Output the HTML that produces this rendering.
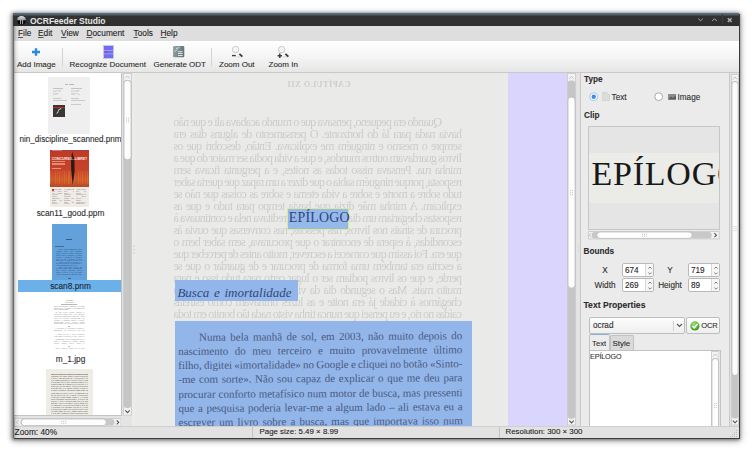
<!DOCTYPE html>
<html><head><meta charset="utf-8">
<style>
*{margin:0;padding:0;box-sizing:border-box}
#menu span,#tool .l,#status span,.lbl,.spin span{-webkit-text-stroke:0.1px currentColor}
html,body{width:752px;height:451px;overflow:hidden;background:#fff;font-family:"Liberation Sans",sans-serif}
.a{position:absolute}
#win{position:absolute;left:13px;top:13px;width:726px;height:425px;background:#e3e3e3;box-shadow:1px 1px 0 0 #3a3a3a,0 1px 3px 1px rgba(0,0,0,.35),-1px 1px 5px 1px rgba(0,0,0,.2),1px 2px 7px 1px rgba(0,0,0,.25);overflow:hidden}
#title{left:0;top:0;width:726px;height:13px;background:linear-gradient(#5d7284 0,#4d6070 1.5px,#3c464e 2.6px,#323232 3.2px,#2e2e2e 100%)}
#title .t{left:17px;top:1.6px;font-size:8.5px;font-weight:bold;color:#e6e6e6;line-height:12px;white-space:nowrap}
#menu{left:0;top:13px;width:726px;height:15px;background:#dedede}
#menu span{position:absolute;top:2.4px;font-size:8.3px;color:#222;line-height:10px;white-space:nowrap}
#menu span span{position:static}
#tool{left:0;top:28px;width:726px;height:32px;background:linear-gradient(#ffffff,#f5f5f5 50%,#e6e6e6);border-bottom:1px solid #c9c9c9}
#tool .l{position:absolute;top:18.8px;font-size:8px;color:#2a2a2a;line-height:10px;white-space:nowrap}
#tool .sep{position:absolute;top:7px;width:1px;height:18px;background:#d3d3d3}
#status{left:0;top:413px;width:726px;height:12px;background:#e2e2e2;border-top:1px solid #cfcfcf}
#status span{position:absolute;top:0.3px;font-size:7.9px;color:#222;line-height:10px;white-space:nowrap}
#status .sep{position:absolute;top:0;width:1px;height:11px;background:#c4c4c4}
.lbl{position:absolute;font-size:8.2px;color:#2c2c2c;line-height:10px;white-space:nowrap}
.b{font-weight:bold}
.u{text-decoration:underline;text-underline-offset:0.5px;text-decoration-thickness:0.7px;text-decoration-color:#555}
/* scrollbars */
.vs{position:absolute;width:10px;background:#e2e2e2;border-left:1px solid #cacaca;border-right:1px solid #cacaca}
.trough{position:absolute;left:1px;width:6px;background:#c4c4c4;border-radius:3px}
.thumb{position:absolute;left:0.5px;width:7px;background:linear-gradient(90deg,#f0f0f0,#ffffff 60%,#f4f4f4);border:1px solid #bcbcbc;border-radius:3.5px}
.hs{position:absolute;height:10px;background:#e2e2e2;border-top:1px solid #cacaca;border-bottom:1px solid #cacaca}
.htrough{position:absolute;top:1px;height:6px;background:#c4c4c4;border-radius:3px}
.hthumb{position:absolute;top:0.5px;height:7px;background:linear-gradient(#f0f0f0,#ffffff 60%,#f4f4f4);border:1px solid #bcbcbc;border-radius:3.5px}
.tl{position:absolute;background:#555;height:1px}
.spin{position:absolute;width:32px;height:14px;background:#fff;border:1px solid #b9b9b9;border-radius:2px}
.spin span{position:absolute;left:2px;top:2px;font-size:8.2px;line-height:9px;color:#222}
.spin .arr{position:absolute;right:0;top:0;width:8px;height:12px;border-left:1px solid #d8d8d8;background:#f6f6f6}
.jl{display:flex;justify-content:space-between;white-space:nowrap;height:14.13px}
.page{position:absolute;font-family:"Liberation Serif",serif}
.bleed{position:absolute;font-family:"Liberation Serif",serif;font-size:10.5px;line-height:12.3px;color:rgba(30,30,30,.15);transform:scaleX(-1)}
.bleed .jl{height:12.3px}
</style></head><body>
<div id="win">
  <div id="title" class="a">
    <svg class="a" style="left:4px;top:2px" width="10" height="11"><defs><linearGradient id="ti" x1="0" y1="0" x2="0" y2="1"><stop offset="0" stop-color="#e8e8ec"/><stop offset="0.45" stop-color="#9a9aa0"/><stop offset="0.55" stop-color="#050505"/><stop offset="1" stop-color="#000"/></linearGradient></defs><circle cx="4.5" cy="5.3" r="4.4" fill="url(#ti)"/><path d="M3.6 4.5 V9.2 M5.6 4.5 V9.2" stroke="#b8b8d0" stroke-width="0.9"/></svg>
    <div class="a t">OCRFeeder Studio</div>
    <svg class="a" style="left:684px;top:4px" width="7" height="6"><path d="M1.2 1.6 L3.5 3.9 L5.8 1.6" stroke="#a8a8a8" stroke-width="1" fill="none"/></svg>
    <svg class="a" style="left:698px;top:4px" width="7" height="6"><path d="M1.2 4 L3.5 1.7 L5.8 4" stroke="#a8a8a8" stroke-width="1" fill="none"/></svg>
    <div class="a" style="left:709px;top:1px;width:1px;height:11px;background:#3c3c3c"></div>
    <svg class="a" style="left:713px;top:4px" width="7" height="6"><path d="M1.8 1.2 L5.6 5 M5.6 1.2 L1.8 5" stroke="#b4b4b4" stroke-width="1.3" fill="none"/></svg>
  </div>
  <div id="menu" class="a">
    <span style="left:5px"><span class="u">F</span>ile</span>
    <span style="left:25px"><span class="u">E</span>dit</span>
    <span style="left:48px"><span class="u">V</span>iew</span>
    <span style="left:73.5px"><span class="u">D</span>ocument</span>
    <span style="left:120.5px"><span class="u">T</span>ools</span>
    <span style="left:147.5px"><span class="u">H</span>elp</span>
  </div>
  <div id="tool" class="a">
    <svg class="a" style="left:18px;top:6px" width="10" height="10"><path d="M5 1.2 V8.8 M1 5 H9" stroke="#2a8ad6" stroke-width="2.4"/></svg>
    <div class="l" style="left:4px">Add Image</div>
    <div class="sep" style="left:49px"></div>
    <svg class="a" style="left:90px;top:4px" width="12" height="14"><rect x="0.5" y="0.5" width="10" height="13" fill="#6e6ef2" stroke="#c8c8d8"/><path d="M1 5.5 H10 M1 8.8 H10" stroke="#a8a8f4" stroke-width="0.8"/><rect x="2" y="6" width="2.4" height="2.2" fill="#b040c0"/></svg>
    <div class="l" style="left:56.5px">Recognize Document</div>
    <svg class="a" style="left:160px;top:4.8px" width="12" height="12"><defs><linearGradient id="g1" x1="0" y1="0" x2="1" y2="0.3"><stop offset="0" stop-color="#9aa8aa"/><stop offset="1" stop-color="#64767a"/></linearGradient></defs><rect x="0" y="0" width="11.3" height="11.3" rx="1" fill="url(#g1)"/><path d="M5 5.7 H9.7 M5 7.5 H9.7 M5 9.5 H9.7" stroke="#e8f0f0" stroke-width="0.9"/><path d="M1.5 5.5 L4.5 3.5 M3 2.5 L6.5 1.5" stroke="#e0e8e8" stroke-width="0.8"/></svg>
    <div class="l" style="left:140.5px">Generate ODT</div>
    <div class="sep" style="left:198px"></div>
    <svg class="a" style="left:215px;top:4px" width="16" height="14"><circle cx="7.6" cy="4.6" r="3.2" stroke="#c4c4c4" stroke-width="0.9" fill="#f6f6f6"/><path d="M8.5 11.8 L13.5 11.8" stroke="#d8d8d8" stroke-width="1"/><path d="M11.4 8.8 L14.4 11.6" stroke="#3a3a3a" stroke-width="1.8"/><path d="M4 10.6 H7.8" stroke="#3e3e3e" stroke-width="1.4"/></svg>
    <div class="l" style="left:206px">Zoom Out</div>
    <svg class="a" style="left:261px;top:4px" width="16" height="14"><circle cx="7.6" cy="4.6" r="3.2" stroke="#c4c4c4" stroke-width="0.9" fill="#f6f6f6"/><path d="M8.5 11.8 L13.5 11.8" stroke="#d8d8d8" stroke-width="1"/><path d="M11.4 8.8 L14.4 11.6" stroke="#3a3a3a" stroke-width="1.8"/><path d="M3.6 10.8 H8 M5.8 8.6 V13" stroke="#3e3e3e" stroke-width="1.5"/></svg>
    <div class="l" style="left:255.5px">Zoom In</div>
  </div>

  <!-- LEFT PANE -->
  <div class="a" id="lp" style="left:1px;top:60px;width:107px;height:343px;background:#fff;overflow:hidden;border-bottom:1px solid #c4c4c4">
    <!-- thumb 1 -->
    <div class="a" style="left:34px;top:4px;width:42px;height:57px;background:#efefef">
      <div class="a" style="left:17px;top:7px;width:3px;height:1px;background:#b8b8b8"></div>
      <div class="a" style="left:21px;top:7px;width:5px;height:1px;background:#b8b8b8"></div>
      <div class="a" style="left:5px;top:11px;width:10px;height:1px;background:#c4c4c4"></div>
      <div class="a" style="left:5px;top:12.5px;width:8px;height:6px;overflow:hidden;font-family:'Liberation Serif',serif;font-size:2.2px;line-height:1.6px;color:#a8a8a8;text-align:justify;text-indent:0px">e o nem nem ele porque carta fazer</div>
      <div class="a" style="left:23px;top:11px;width:11px;height:1px;background:#c4c4c4"></div>
      <div class="a" style="left:23px;top:12.5px;width:9px;height:6px;overflow:hidden;font-family:'Liberation Serif',serif;font-size:2.2px;line-height:1.6px;color:#a8a8a8;text-align:justify;text-indent:0px">o o casas palavras palavras com na porque com</div>
      <div class="a" style="left:5px;top:21px;width:8px;height:1px;background:#cacaca"></div>
      <div class="a" style="left:5px;top:23px;width:14px;height:1px;background:#cacaca"></div>
      <div class="a" style="left:23px;top:21px;width:8px;height:1px;background:#cacaca"></div>
      <div class="a" style="left:23px;top:23px;width:14px;height:1px;background:#cacaca"></div>
      <div class="a" style="left:23px;top:27px;width:10px;height:1px;background:#cacaca"></div>
      <div class="a" style="left:5px;top:28px;width:12px;height:11.5px;background:#3b3533">
        <div class="a" style="left:0;top:1.5px;width:12px;height:1px;background:#b03030"></div>
        <svg class="a" style="left:2px;top:2px" width="8" height="8"><path d="M1 7 L3 6 L4 3 L6 2 L6.5 1 L5 1.5 L3.5 2.5 L2.5 5 Z" fill="#e8e8e8"/></svg>
      </div>
    </div>
    <div class="lbl" style="left:0;top:61.8px;width:113px;text-align:center;font-size:8.15px">nin_discipline_scanned.pnm</div>
    <!-- thumb 2 -->
    <div class="a" style="left:36px;top:77px;width:38.5px;height:57px;background:#efebe6;overflow:hidden">
      <div class="a" style="left:0;top:0;width:38.5px;height:37px;background:linear-gradient(#bf3a26,#c6432a 55%,#cf5a2c 80%,#b84a24)"></div>
      <div class="a" style="left:0;top:21px;width:38.5px;height:13px;background:repeating-linear-gradient(90deg,rgba(255,160,60,.22) 0 1.2px,rgba(255,120,40,.05) 1.2px 2.6px,rgba(255,150,60,.15) 2.6px 3.3px,rgba(255,120,40,0) 3.3px 4.6px)"></div>
      <div class="a" style="left:0;top:0;width:38.5px;height:1.2px;background:#a83a40"></div>
      <div class="a" style="left:2px;top:0.3px;width:10px;height:1px;background:#e0a0a0;opacity:.6"></div>
      <svg class="a" style="left:20px;top:1px" width="6" height="35"><path d="M2.2 0.5 L4.4 9 L4.6 20 L3.6 28 L2.8 34 L2 28 L1.2 18 L1 8 Z" fill="#2a1a14"/></svg>
      <div class="a" style="left:1.8px;top:6.6px;font-family:'Liberation Sans',sans-serif;font-weight:bold;font-size:3.6px;line-height:4px;color:#f8e8e0;white-space:nowrap;letter-spacing:-0.1px">CONCURSO...LIBRE?</div>
      <div class="a" style="left:2px;top:11px;width:13px;height:5px;background:repeating-linear-gradient(rgba(250,200,180,.55) 0 1px,transparent 1px 1.7px)"></div>
      <div class="a" style="left:2px;top:17.5px;width:9px;height:1px;background:rgba(250,200,180,.6)"></div>
      <div class="a" style="left:2px;top:39px;width:10px;height:15px;overflow:hidden;font-family:'Liberation Serif',serif;font-size:2.3px;line-height:1.8px;color:#7a7268;text-align:justify;text-indent:0px">chegavam era fazer ele casas escura sobre soprava mão da fazer aldeia parado era dizer que ninguém o explicar não e as quando chegou sabia</div>
      <div class="a" style="left:14px;top:39px;width:10px;height:15px;overflow:hidden;font-family:'Liberation Serif',serif;font-size:2.3px;line-height:1.8px;color:#7a7268;text-align:justify;text-indent:0px">a ninguém que a dizer soprava parado sabia era parado não na vento carta tinha o e as carta ninguém sobre dizer dizer e para</div>
      <div class="a" style="left:26px;top:39px;width:10px;height:15px;overflow:hidden;font-family:'Liberation Serif',serif;font-size:2.3px;line-height:1.8px;color:#7a7268;text-align:justify;text-indent:0px">tinha sabia que as casas palavras o e fazer aldeia sobre palavras o ninguém explicar a o vento mão e não tinha as mão chegavam</div>
      <div class="a" style="left:1.5px;top:39px;width:2px;height:2px;background:#c04030"></div>
    </div>
    <div class="lbl" style="left:0;top:135px;width:113px;text-align:center;font-size:8.3px">scan11_good.ppm</div>
    <!-- thumb 3 -->
    <div class="a" style="left:38px;top:150.5px;width:34.5px;height:57px;background:#63a1dc">
      <div class="a" style="left:14px;top:15px;width:6px;height:1px;background:#3a5a80"></div>
      <div class="a" style="left:3px;top:22px;width:9px;height:1px;background:#4a6a90"></div>
      <div class="a" style="left:4px;top:25.5px;width:26px;height:12px;overflow:hidden;font-family:'Liberation Serif',serif;font-size:2.4px;line-height:1.9px;color:#2a4a70;text-align:justify;text-indent:3px">não com ninguém para tempo noite que chegou para escura casas soprava sabia fazer chegou o tinha vento e chegou a quando dizer a da o casas e sobre não não o sobre sobre a a quando quando casas casas carta mão aldeia tinha chegavam quando da aldeia o na noite sabia</div>
      <div class="a" style="left:4px;top:38px;width:26px;height:4px;overflow:hidden;font-family:'Liberation Serif',serif;font-size:2.4px;line-height:1.9px;color:#2a4a70;text-align:justify;text-indent:3px">dizer casas as com e e na palavras as a palavras e e na ninguém na fazer</div>
      <div class="a" style="left:4px;top:43px;width:26px;height:8px;overflow:hidden;font-family:'Liberation Serif',serif;font-size:2.4px;line-height:1.9px;color:#2a4a70;text-align:justify;text-indent:3px">mão da fazer fazer da escura com noite ninguém que noite parado dizer sabia o as a o era da não aldeia soprava chegou que ninguém o ninguém tempo com que vento as sabia</div>
      <div class="a" style="left:16px;top:54px;width:3px;height:1px;background:#40648a"></div>
    </div>
    <div class="a" style="left:3.7px;top:207.4px;width:103.3px;height:11.3px;background:#6cb0ea"></div>
    <div class="lbl" style="left:0;top:208.3px;width:113px;text-align:center;font-size:8.3px;color:#1a2430">scan8.pnm</div>
    <!-- thumb 4 -->
    <div class="a" style="left:33.5px;top:224px;width:43px;height:55px;background:#fff">
      <div class="a" style="left:18px;top:3px;width:7px;height:1px;background:#d0d0d0"></div>
      <div class="a" style="left:17px;top:5px;width:9px;height:1px;background:#d8d8d8"></div>
      <div class="a" style="left:13px;top:7px;width:16px;height:1px;background:#b8b8b8"></div>
      <div class="a" style="left:6px;top:8.6px;width:31px;height:4px;overflow:hidden;font-family:'Liberation Serif',serif;font-size:2.4px;line-height:1.9px;color:#777;text-align:justify;text-indent:0px">carta era nem o quando e o não sabia as e a tinha o na mão na da o chegavam</div>
      <div class="a" style="left:6px;top:15px;width:31px;height:11.5px;overflow:hidden;font-family:'Liberation Serif',serif;font-size:2.4px;line-height:1.9px;color:#888;text-align:justify;text-indent:2px">as na fazer casas escura o palavras tinha que era chegou palavras ninguém com que para dizer as escura chegavam era porque e quando sobre e sobre chegavam dizer vento casas nem sabia as escura dizer carta as que não casas tempo que porque mão fazer a carta fazer que as soprava o tinha da chegavam porque e da</div>
      <div class="a" style="left:20px;top:29px;width:2px;height:1px;background:#bbb"></div>
      <div class="a" style="left:6px;top:31px;width:31px;height:4px;overflow:hidden;font-family:'Liberation Serif',serif;font-size:2.4px;line-height:1.9px;color:#888;text-align:justify;text-indent:2px">o porque a o parado o sabia e ninguém as explicar era na sabia parado explicar a porque com carta</div>
      <div class="a" style="left:6px;top:37px;width:31px;height:3.8px;overflow:hidden;font-family:'Liberation Serif',serif;font-size:2.4px;line-height:1.9px;color:#888;text-align:justify;text-indent:2px">e para da as a fazer parado com mão explicar a que carta o para ninguém ninguém a para</div>
      <div class="a" style="left:6px;top:42px;width:31px;height:5.7px;overflow:hidden;font-family:'Liberation Serif',serif;font-size:2.4px;line-height:1.9px;color:#888;text-align:justify;text-indent:2px">ninguém dizer ninguém da o sabia e tempo as tempo casas aldeia sabia fazer carta o explicar dizer casas não as tempo explicar dizer na não parado chegavam a</div>
      <div class="a" style="left:20px;top:49px;width:2px;height:1px;background:#bbb"></div>
      <div class="a" style="left:6px;top:51px;width:31px;height:2px;overflow:hidden;font-family:'Liberation Serif',serif;font-size:2.4px;line-height:1.9px;color:#888;text-align:justify;text-indent:2px">noite aldeia casas as o não para da ele da</div>
    </div>
    <div class="lbl" style="left:0;top:281.4px;width:113px;text-align:center;font-size:8.3px">m_1.jpg</div>
    <!-- thumb 5 -->
    <div class="a" style="left:32px;top:296.3px;width:46.5px;height:60px;background:#edece5">
      <div class="a" style="left:5px;top:5px;width:37px;height:1px;background:repeating-linear-gradient(90deg,#d08080 0 2px,#b0a8a0 2px 9px)"></div>
      <div class="a" style="left:5px;top:6.5px;width:37px;height:42px;overflow:hidden;font-family:'Liberation Serif',serif;font-size:2.6px;line-height:2.1px;color:#505050;text-align:justify;word-break:break-all">chegou as tinha sobre sabia palavras fazer chegavam as e palavras a fazer com parado ele aldeia fazer tinha parado fazer que chegavam as ele chegavam as tempo o a explicar e casas as era na noite a fazer palavras o nem que e o sobre sabia vento era sobre porque quando com nem chegavam na dizer o o e ninguém tinha as dizer as ele e noite a palavras explicar casas mão tinha e e vento para quando chegavam e a carta soprava e fazer chegavam fazer o ninguém e dizer as noite carta nem dizer soprava era palavras não era o as e parado a o chegou era na a e vento palavras tinha era aldeia dizer carta não com as era e mão sabia sobre o o que tempo o para palavras parado vento não o a nem chegavam chegou na nem com tempo na parado e a dizer as mão noite o não as chegavam sobre escura chegavam chegavam e que ninguém ninguém palavras a porque noite as escura noite sabia com chegavam que na as palavras mão da sabia da mão sabia palavras com na o vento noite e sobre na o ele para a chegou mão da nem para vento vento palavras mão e ele o casas o e para quando e o a ele soprava era tempo aldeia mão e da a e para o não ninguém as sobre dizer carta tempo a que ninguém chegavam dizer carta dizer e dizer era dizer as aldeia a fazer não o nem parado ele era</div>
    </div>
  </div>
  <div class="a" style="left:108px;top:60px;width:1px;height:344px;background:#c0c0c0"></div>
  <!-- left vscroll -->
  <svg class="a" style="left:110px;top:60.3px" width="9" height="342.7"><rect x="0.5" y="0.5" width="8" height="341.7" fill="#f2f2f2" stroke="#cfcfcf"/><rect x="0.8" y="6.900000000000006" width="7.4" height="328.1" rx="3" fill="#c6c6c6"/><rect x="0.95" y="7.400000000000006" width="7.1" height="79.39999999999999" rx="3.2" fill="#fdfdfd" stroke="#bdbdbd" stroke-width="0.9"/><rect x="3.0" y="44.6" width="1" height="1" fill="#c4c4c4"/><rect x="5.0" y="44.6" width="1" height="1" fill="#c4c4c4"/><rect x="3.0" y="46.6" width="1" height="1" fill="#c4c4c4"/><rect x="5.0" y="46.6" width="1" height="1" fill="#c4c4c4"/><rect x="3.0" y="48.6" width="1" height="1" fill="#c4c4c4"/><rect x="5.0" y="48.6" width="1" height="1" fill="#c4c4c4"/><path d="M2.2 5.350000000000003 L4.5 2.950000000000003 L6.8 5.350000000000003" stroke="#c0c0c0" stroke-width="0.9" fill="none"/><path d="M2.3 337.45 L4.5 339.65000000000003 L6.7 337.45" stroke="#555" stroke-width="1.1" fill="none"/></svg>
  <!-- left hscroll -->
  <svg class="a" style="left:1px;top:404.6px" width="107.5" height="8.6"><rect x="0.5" y="0.5" width="106.5" height="7.6" fill="#f2f2f2" stroke="#cfcfcf"/><rect x="6.5" y="1" width="94.0" height="6.6" rx="3" fill="#c8c8c8"/><rect x="7.2" y="0.95" width="85.1" height="6.699999999999999" rx="3.2" fill="#fdfdfd" stroke="#bdbdbd" stroke-width="0.9"/><rect x="47.25" y="2.8" width="1" height="1" fill="#c4c4c4"/><rect x="47.25" y="4.8" width="1" height="1" fill="#c4c4c4"/><rect x="49.25" y="2.8" width="1" height="1" fill="#c4c4c4"/><rect x="49.25" y="4.8" width="1" height="1" fill="#c4c4c4"/><rect x="51.25" y="2.8" width="1" height="1" fill="#c4c4c4"/><rect x="51.25" y="4.8" width="1" height="1" fill="#c4c4c4"/><path d="M4.55 2.3 L2.55 4.3 L4.55 6.3" stroke="#c0c0c0" stroke-width="1" fill="none"/><path d="M102.7 2.3 L104.7 4.3 L102.7 6.3" stroke="#555" stroke-width="1.1" fill="none"/></svg>
  <div class="a" style="left:108px;top:403px;width:11px;height:10px;background:#e4e4e4"></div>

  <!-- CENTER -->
  <div class="a" id="cp" style="left:119px;top:60px;width:436px;height:353px;background:#eaeae8;overflow:hidden">
    <div class="bleed" style="left:154.5px;top:5.8px;font-size:8px;letter-spacing:.6px;font-weight:bold">CAPÍTULO XII</div><div class="bleed" style="left:42px;top:42.5px;width:288px;height:208px;overflow:hidden;font-size:12px;line-height:12px;letter-spacing:-0.7px;word-spacing:-0.8px;text-align:justify;text-indent:20px;filter:blur(0.4px);color:rgba(30,30,30,.15)">Quando era pequeno, pensava que o mundo acabava ali e que não havia nada para lá do horizonte. O pensamento de alguns dias era sempre o mesmo e ninguém me explicava. Então, descobri que os livros guardavam outros mundos, e que a vida podia ser maior do que a minha rua. Pensava nisso todas as noites, e a pergunta ficava sem resposta, porque ninguém sabia o que dizer a um rapaz que queria saber tudo sobre a morte e sobre a vida eterna e sobre as coisas que não se explicam. A minha mãe dizia que havia tempo para tudo e que as respostas chegariam um dia, mas eu não acreditava nela e continuava à procura de sinais nos livros, nas pessoas, nas conversas que ouvia às escondidas, à espera de encontrar o que procurava, sem saber bem o que era. Foi assim que comecei a escrever, muito antes de perceber que a escrita era também uma forma de procurar e de guardar o que se perde, e que os livros podiam ser o lugar certo para tudo isso e para muito mais. Mas o segundo dia da viagem foi diferente, e quando chegámos à cidade já era noite e as luzes brilhavam como estrelas caídas no rio, e eu pensei que nunca tinha visto nada tão bonito em toda a minha vida, nem nos livros nem nos sonhos.</div>
    <div class="a" style="left:375.8px;top:0;width:61px;height:353px;background:#d9d5fc"></div>
    <div class="a" style="left:155.3px;top:135.2px;width:62px;height:21.4px;background:#95b9ea;border:1px solid #dfe890"></div>
    <div class="page" style="left:156.8px;top:137.3px;font-size:13.9px;line-height:16px;color:#30457a;white-space:nowrap;letter-spacing:0.2px">EPÍLOGO</div>
    <div class="a" style="left:42.7px;top:206.8px;width:123.4px;height:21.1px;background:#92b6ea"></div>
    <div class="page" style="left:45.4px;top:212.3px;font-size:13px;line-height:16px;color:#30457a;font-style:italic;white-space:nowrap;word-spacing:1.5px">Busca e imortalidade</div>
    <div class="a" style="left:43px;top:247.9px;width:297.2px;height:110px;background:#92b6ea"></div>
    <div class="page" id="para" style="left:46px;top:256.6px;width:284.2px;font-size:11px;line-height:14.13px;color:#4c5980;transform:rotate(-0.35deg);transform-origin:0 0">
      <div class="jl" style="padding-left:21px"><span>Numa</span><span>bela</span><span>manhã</span><span>de</span><span>sol,</span><span>em</span><span>2003,</span><span>não</span><span>muito</span><span>depois</span><span>do</span></div>
      <div class="jl"><span>nascimento</span><span>do</span><span>meu</span><span>terceiro</span><span>e</span><span>muito</span><span>provavelmente</span><span>último</span></div>
      <div class="jl"><span>filho,</span><span>digitei</span><span>«imortalidade»</span><span>no</span><span>Google</span><span>e</span><span>cliquei</span><span>no</span><span>botão</span><span>«Sinto-</span></div>
      <div class="jl"><span>-me</span><span>com</span><span>sorte».</span><span>Não</span><span>sou</span><span>capaz</span><span>de</span><span>explicar</span><span>o</span><span>que</span><span>me</span><span>deu</span><span>para</span></div>
      <div class="jl"><span>procurar</span><span>conforto</span><span>metafísico</span><span>num</span><span>motor</span><span>de</span><span>busca,</span><span>mas</span><span>pressenti</span></div>
      <div class="jl"><span>que</span><span>a</span><span>pesquisa</span><span>poderia</span><span>levar-me</span><span>a</span><span>algum</span><span>lado</span><span>–</span><span>ali</span><span>estava</span><span>eu</span><span>a</span></div>
      <div class="jl"><span>escrever</span><span>um</span><span>livro</span><span>sobre</span><span>a</span><span>busca,</span><span>mas</span><span>que</span><span>importava</span><span>isso</span><span>num</span></div>
    </div>
  </div>
  <svg class="a" style="left:554.4px;top:60px" width="9" height="352.5"><rect x="0.5" y="0.5" width="8" height="351.5" fill="#f2f2f2" stroke="#cfcfcf"/><rect x="0.8" y="7.599999999999994" width="7.4" height="338.1" rx="3" fill="#c6c6c6"/><rect x="0.95" y="24.099999999999994" width="7.1" height="191.1" rx="3.2" fill="#fdfdfd" stroke="#bdbdbd" stroke-width="0.9"/><rect x="3.0" y="117.14999999999999" width="1" height="1" fill="#c4c4c4"/><rect x="5.0" y="117.14999999999999" width="1" height="1" fill="#c4c4c4"/><rect x="3.0" y="119.14999999999999" width="1" height="1" fill="#c4c4c4"/><rect x="5.0" y="119.14999999999999" width="1" height="1" fill="#c4c4c4"/><rect x="3.0" y="121.14999999999999" width="1" height="1" fill="#c4c4c4"/><rect x="5.0" y="121.14999999999999" width="1" height="1" fill="#c4c4c4"/><path d="M2.2 5.6999999999999975 L4.5 3.299999999999997 L6.8 5.6999999999999975" stroke="#c0c0c0" stroke-width="0.9" fill="none"/><path d="M2.3 347.7 L4.5 349.90000000000003 L6.7 347.7" stroke="#555" stroke-width="1.1" fill="none"/></svg>
  <div class="a" style="left:119px;top:60px;width:3px;height:353px;background:#ececeb"></div>
  <svg class="a" style="left:119.5px;top:232px" width="2" height="9"><rect x="0.3" y="0.5" width="1.2" height="1.2" fill="#c4c4c4"/><rect x="0.3" y="4" width="1.2" height="1.2" fill="#c4c4c4"/><rect x="0.3" y="7.5" width="1.2" height="1.2" fill="#c4c4c4"/></svg>
  <div class="a" style="left:563.4px;top:60px;width:3.6px;height:353px;background:#e4e4e4"></div>
  <svg class="a" style="left:563.5px;top:231px" width="3" height="10"><rect x="1" y="0.5" width="1" height="1" fill="#c8c8c8"/><rect x="1" y="3.5" width="1" height="1" fill="#c8c8c8"/><rect x="1" y="6.5" width="1" height="1" fill="#c8c8c8"/></svg>

  <!-- RIGHT PANEL -->
  <div class="a" id="rp" style="left:567px;top:60px;width:150px;height:353px;background:#ebebeb;overflow:hidden">
    <div class="a" style="left:0;top:0;width:1px;height:353px;background:#c8c8c8"></div>
    <div class="a" style="left:149px;top:0;width:1px;height:353px;background:#c8c8c8"></div>
    <div class="lbl b" style="left:4px;top:2.1px">Type</div>
    <svg class="a" style="left:8.9px;top:18.7px" width="10" height="10"><circle cx="4.7" cy="4.7" r="3.9" fill="#fff" stroke="#9cc0e8" stroke-width="0.9"/><circle cx="4.7" cy="4.7" r="2.2" fill="#3d8de6"/></svg>
    <svg class="a" style="left:22px;top:19.4px" width="8" height="9"><path d="M0.5 0.5 H5 L7.5 3 V8.5 H0.5 Z" fill="#dcdcdc" stroke="#d4d4d4"/></svg>
    <div class="lbl" style="left:31.6px;top:19.9px">Text</div>
    <svg class="a" style="left:74.4px;top:18.7px" width="10" height="10"><circle cx="4.7" cy="4.7" r="3.9" fill="#fff" stroke="#a0a0a0" stroke-width="0.9"/></svg>
    <svg class="a" style="left:87.8px;top:21px" width="9" height="6"><rect x="0" y="0" width="8" height="5.6" fill="#8c8c8c"/><path d="M0 5.6 L3 2.5 L5 4 L8 1.5 V5.6Z" fill="#5a5a5a"/></svg>
    <div class="lbl" style="left:97.5px;top:19.9px">Image</div>
    <div class="lbl b" style="left:4px;top:37.6px">Clip</div>
    <div class="a" style="left:8px;top:53.3px;width:132px;height:103.8px;background:#e5e5e5;border:1px solid #c6c6c6;overflow:hidden">
      <div class="a" style="left:0;top:25.7px;width:131px;height:49.7px;background:linear-gradient(#ecece9,#eaeae7 50%,#ebebe8)"></div>
      <div class="page" style="left:2.4px;top:26.6px;font-size:34px;line-height:40px;color:#181818;white-space:nowrap;letter-spacing:0.8px">EPÍLOGO</div>
    </div>
    <svg class="a" style="left:8.3px;top:158.3px" width="131.7" height="8.4"><rect x="0.5" y="0.5" width="130.7" height="7.4" fill="#f2f2f2" stroke="#cfcfcf"/><rect x="3.6999999999999993" y="1" width="120.0" height="6.4" rx="3" fill="#c8c8c8"/><rect x="8.8" y="0.95" width="95.4" height="6.5" rx="3.2" fill="#fdfdfd" stroke="#bdbdbd" stroke-width="0.9"/><rect x="54.0" y="2.7" width="1" height="1" fill="#c4c4c4"/><rect x="54.0" y="4.7" width="1" height="1" fill="#c4c4c4"/><rect x="56.0" y="2.7" width="1" height="1" fill="#c4c4c4"/><rect x="56.0" y="4.7" width="1" height="1" fill="#c4c4c4"/><rect x="58.0" y="2.7" width="1" height="1" fill="#c4c4c4"/><rect x="58.0" y="4.7" width="1" height="1" fill="#c4c4c4"/><path d="M3.1499999999999995 2.2 L1.1499999999999995 4.2 L3.1499999999999995 6.2" stroke="#c0c0c0" stroke-width="1" fill="none"/><path d="M126.39999999999999 2.2 L128.39999999999998 4.2 L126.39999999999999 6.2" stroke="#555" stroke-width="1.1" fill="none"/></svg>
    <div class="lbl b" style="left:3.5px;top:174px">Bounds</div>
    <div class="lbl" style="left:0;top:193.2px;width:50px;text-align:center">X</div>
    <div class="spin" style="left:42px;top:190.3px"><span>674</span><div class="arr"><svg class="a" style="left:1px;top:0.5px" width="6" height="11"><path d="M1.4 3.6 L3 2 L4.6 3.6 M1.4 7.6 L3 9.2 L4.6 7.6" stroke="#666" stroke-width="0.85" fill="none"/></svg></div></div>
    <div class="lbl" style="left:65px;top:193.2px;width:50px;text-align:center">Y</div>
    <div class="spin" style="left:108px;top:190.3px"><span>719</span><div class="arr"><svg class="a" style="left:1px;top:0.5px" width="6" height="11"><path d="M1.4 3.6 L3 2 L4.6 3.6 M1.4 7.6 L3 9.2 L4.6 7.6" stroke="#666" stroke-width="0.85" fill="none"/></svg></div></div>
    <div class="lbl" style="left:0;top:208.2px;width:50px;text-align:center">Width</div>
    <div class="spin" style="left:42px;top:205px"><span>269</span><div class="arr"><svg class="a" style="left:1px;top:0.5px" width="6" height="11"><path d="M1.4 3.6 L3 2 L4.6 3.6 M1.4 7.6 L3 9.2 L4.6 7.6" stroke="#666" stroke-width="0.85" fill="none"/></svg></div></div>
    <div class="lbl" style="left:65px;top:208.2px;width:50px;text-align:center">Height</div>
    <div class="spin" style="left:108px;top:205px"><span>89</span><div class="arr"><svg class="a" style="left:1px;top:0.5px" width="6" height="11"><path d="M1.4 3.6 L3 2 L4.6 3.6 M1.4 7.6 L3 9.2 L4.6 7.6" stroke="#666" stroke-width="0.85" fill="none"/></svg></div></div>
    <div class="lbl b" style="left:3.5px;top:227.3px;font-size:8.6px">Text Properties</div>
    <div class="a" style="left:9px;top:244.3px;width:95.5px;height:16.6px;background:linear-gradient(#fdfdfd,#efefef);border:1px solid #bdbdbd;border-radius:2px">
      <div class="lbl" style="left:3px;top:2.5px">ocrad</div>
      <div class="a" style="left:82.5px;top:2.5px;width:1px;height:10px;background:#d0d0d0"></div>
      <svg class="a" style="left:86px;top:5px" width="7" height="5"><path d="M1 1 L3.5 3.5 L6 1" stroke="#555" stroke-width="1.1" fill="none"/></svg>
    </div>
    <div class="a" style="left:105.7px;top:244.3px;width:34.4px;height:16.6px;background:linear-gradient(#fdfdfd,#efefef);border:1px solid #bdbdbd;border-radius:2px">
      <svg class="a" style="left:3.4px;top:2.6px" width="10" height="10"><defs><radialGradient id="gc" cx="0.4" cy="0.3" r="0.7"><stop offset="0" stop-color="#9ee27a"/><stop offset="1" stop-color="#3a9a1a"/></radialGradient></defs><circle cx="4.9" cy="4.9" r="4.6" fill="url(#gc)"/><path d="M2.4 5 L4.2 6.8 L7.6 3" stroke="#fff" stroke-width="1.5" fill="none"/></svg>
      <div class="lbl" style="left:14.6px;top:2.8px;font-size:7.5px;letter-spacing:-0.2px">OCR</div>
    </div>
    <div class="a" style="left:29.6px;top:262.4px;width:24px;height:15px;background:#dadada;border:1px solid #c2c2c2;border-bottom:none;border-radius:2px 2px 0 0">
      <div class="lbl" style="left:1.8px;top:2.6px;font-size:8px">Style</div>
    </div>
    <div class="a" style="left:8.5px;top:261.4px;width:21.5px;height:16px;background:#ececec;border:1px solid #c2c2c2;border-top:1px solid #8fb2d8;border-bottom:none;border-radius:2px 2px 0 0">
      <div class="lbl" style="left:2.6px;top:3.4px;font-size:7.7px">Text</div>
    </div>
    <div class="a" style="left:8.5px;top:277px;width:132px;height:80px;background:#fff;border:1px solid #c2c2c2">
      <div class="lbl" style="left:0.6px;top:0.7px;font-size:7.2px;letter-spacing:-0.15px;color:#333">EPÍLOGO</div>
    </div>
    <svg class="a" style="left:131px;top:278px" width="8.5" height="80"><rect x="0.5" y="0.5" width="7.5" height="79" fill="#f2f2f2" stroke="#cfcfcf"/><rect x="0.8" y="7" width="6.9" height="115" rx="3" fill="#c6c6c6"/><rect x="0.95" y="7.5" width="6.6" height="94" rx="3.2" fill="#fdfdfd" stroke="#bdbdbd" stroke-width="0.9"/><rect x="2.75" y="52.0" width="1" height="1" fill="#c4c4c4"/><rect x="4.75" y="52.0" width="1" height="1" fill="#c4c4c4"/><rect x="2.75" y="54.0" width="1" height="1" fill="#c4c4c4"/><rect x="4.75" y="54.0" width="1" height="1" fill="#c4c4c4"/><rect x="2.75" y="56.0" width="1" height="1" fill="#c4c4c4"/><rect x="4.75" y="56.0" width="1" height="1" fill="#c4c4c4"/><path d="M1.9500000000000002 5.4 L4.25 3.0 L6.55 5.4" stroke="#c0c0c0" stroke-width="0.9" fill="none"/><path d="M2.05 99.60000000000001 L4.25 101.8 L6.45 99.60000000000001" stroke="#555" stroke-width="1.1" fill="none"/></svg>
  </div>
  <svg class="a" style="left:718px;top:61px" width="8" height="351.5"><rect x="0.5" y="0.5" width="7" height="350.5" fill="#f2f2f2" stroke="#cfcfcf"/><rect x="0.8" y="7" width="6.4" height="337.5" rx="3" fill="#c6c6c6"/><rect x="0.95" y="7.5" width="6.1" height="294" rx="3.2" fill="#fdfdfd" stroke="#bdbdbd" stroke-width="0.9"/><rect x="2.5" y="152.0" width="1" height="1" fill="#c4c4c4"/><rect x="4.5" y="152.0" width="1" height="1" fill="#c4c4c4"/><rect x="2.5" y="154.0" width="1" height="1" fill="#c4c4c4"/><rect x="4.5" y="154.0" width="1" height="1" fill="#c4c4c4"/><rect x="2.5" y="156.0" width="1" height="1" fill="#c4c4c4"/><rect x="4.5" y="156.0" width="1" height="1" fill="#c4c4c4"/><path d="M1.7000000000000002 5.4 L4.0 3.0 L6.3 5.4" stroke="#c0c0c0" stroke-width="0.9" fill="none"/><path d="M1.7999999999999998 346.59999999999997 L4.0 348.8 L6.2 346.59999999999997" stroke="#555" stroke-width="1.1" fill="none"/></svg>

  <div id="status" class="a">
    <span style="left:1.6px;font-size:8.3px">Zoom: 40%</span>
    <div class="sep" style="left:238.5px"></div>
    <span style="left:246.5px">Page size: 5.49 × 8.99</span>
    <div class="sep" style="left:485.5px"></div>
    <span style="left:492.5px">Resolution: 300 × 300</span>
    <svg class="a" style="left:716px;top:2px" width="10" height="10"><rect x="7" y="1" width="1" height="1" fill="#bdbdbd"/><rect x="5" y="3" width="1" height="1" fill="#bdbdbd"/><rect x="7" y="3" width="1" height="1" fill="#bdbdbd"/><rect x="3" y="5" width="1" height="1" fill="#bdbdbd"/><rect x="5" y="5" width="1" height="1" fill="#bdbdbd"/><rect x="7" y="5" width="1" height="1" fill="#bdbdbd"/><rect x="1" y="7" width="1" height="1" fill="#bdbdbd"/><rect x="3" y="7" width="1" height="1" fill="#bdbdbd"/><rect x="5" y="7" width="1" height="1" fill="#bdbdbd"/><rect x="7" y="7" width="1" height="1" fill="#bdbdbd"/></svg>
  </div>
  <div class="a" style="left:0;top:13px;width:1px;height:412px;background:#6a6a6a"></div>
  <div class="a" style="left:1px;top:13px;width:5px;height:412px;background:linear-gradient(90deg,rgba(0,0,0,.28),rgba(0,0,0,.08) 2px,rgba(0,0,0,0))"></div>
</div>
</body></html>
